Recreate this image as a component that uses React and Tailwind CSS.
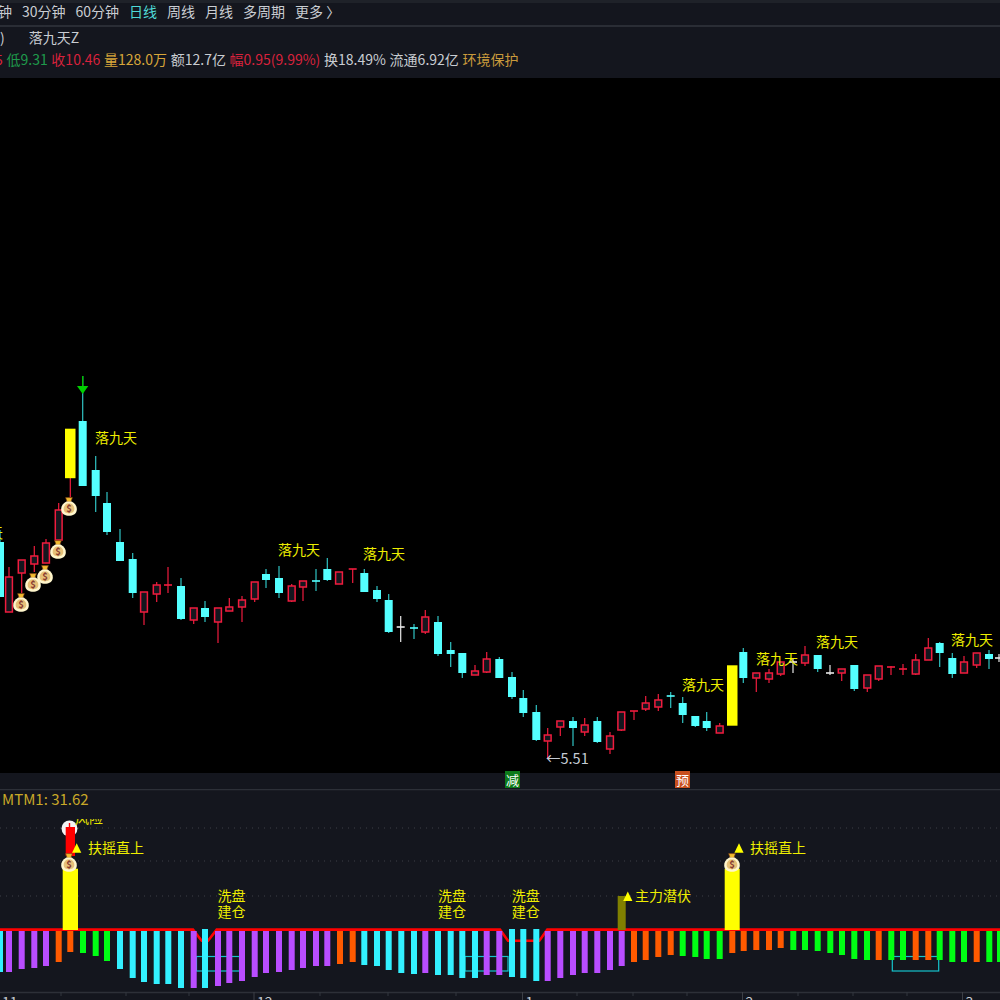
const CANDLES = [
  [0, 530, 542, 597, 597, 'c'], [9, 567, 577, 612, 612, 'r'], [21.7, 560, 560, 573, 593, 'r'], [34.3, 546, 556, 564, 572, 'r'],
  [46, 539, 543, 563, 563, 'r'], [58.7, 503, 510, 540, 540, 'r'], [82.7, 376, 421, 486, 486, 'c'], [95.7, 456, 470, 496, 512, 'c'],
  [107, 492, 503, 532, 535, 'c'], [120, 529, 542, 561, 561, 'c'], [132.7, 553, 559, 593, 598, 'c'], [144, 592, 592, 612, 625, 'r'],
  [156.7, 582, 585, 594, 602, 'r'], [168, 567, 585, 585, 593, 'r'], [181, 578, 586, 619, 620, 'c'], [193.7, 608, 608, 620, 624, 'r'],
  [205, 601, 608, 617, 622, 'c'], [218, 608, 608, 622, 643, 'r'], [229.3, 598, 607, 611, 611, 'r'], [242, 596, 600, 607, 622, 'r'],
  [254.7, 582, 582, 599, 602, 'r'], [266, 569, 574, 580, 588, 'c'], [279, 566, 578, 593, 598, 'c'], [291.7, 584, 586, 601, 602, 'r'],
  [303, 581, 581, 587, 601, 'r'], [316, 569, 581, 581, 591, 'c'], [327.3, 558, 569, 580, 581, 'c'], [339, 572, 572, 584, 584, 'r'],
  [352.7, 569, 569, 569, 583, 'r'], [364.3, 569, 573, 592, 592, 'c'], [377, 586, 590, 599, 602, 'c'], [388.7, 594, 600, 632, 633, 'c'],
  [400.7, 616, 627, 627, 642, 'w'], [414, 624, 628, 628, 639, 'c'], [425.3, 610, 617, 632, 634, 'r'], [438, 616, 622, 654, 656, 'c'],
  [450.7, 642, 650, 654, 667, 'c'], [462.3, 653, 653, 673, 678, 'c'], [475, 665, 671, 675, 675, 'r'], [486.7, 652, 659, 672, 673, 'r'],
  [499.3, 657, 659, 678, 678, 'c'], [512, 672, 677, 697, 699, 'c'], [523.3, 690, 698, 713, 717, 'c'], [536.3, 705, 712, 740, 741, 'c'],
  [547.7, 728, 735, 741, 759, 'r'], [560.3, 721, 721, 727, 736, 'r'], [573, 717, 721, 728, 746, 'c'], [584.7, 718, 725, 732, 736, 'r'],
  [597.3, 717, 721, 742, 743, 'c'], [610, 732, 736, 749, 754, 'r'], [621.3, 712, 712, 730, 731, 'r'], [634, 711, 711, 711, 720, 'r'],
  [645.7, 696, 703, 709, 711, 'r'], [658.3, 694, 700, 707, 711, 'r'], [670.7, 692, 696, 696, 708, 'c'], [682.7, 697, 703, 715, 723, 'c'],
  [695.3, 716, 716, 726, 727, 'c'], [706.7, 712, 721, 728, 731, 'c'], [719.7, 723, 726, 733, 733, 'r'], [743.3, 648, 652, 678, 683, 'c'],
  [756.3, 673, 673, 678, 692, 'r'], [769, 669, 673, 679, 683, 'r'], [780.7, 662, 662, 674, 676, 'r'], [793, 658, 662, 662, 673, 'w'],
  [805, 646, 655, 663, 666, 'r'], [817.7, 655, 655, 669, 672, 'c'], [830, 665, 673, 673, 675, 'w'], [841.7, 669, 669, 673, 681, 'r'],
  [854.3, 665, 665, 689, 691, 'c'], [867.3, 675, 675, 688, 692, 'r'], [878.7, 666, 666, 679, 681, 'r'], [891, 666, 667, 667, 675, 'r'],
  [903, 664, 669, 669, 675, 'r'], [915.7, 654, 660, 674, 675, 'r'], [928.3, 638, 648, 660, 660, 'r'], [939.7, 642, 643, 653, 667, 'c'],
  [952.3, 653, 658, 674, 678, 'c'], [964, 656, 662, 673, 673, 'r'], [976.7, 653, 653, 665, 668, 'r'], [989, 650, 654, 659, 669, 'c'],
  [999, 654, 658, 658, 662, 'w'],
]

const BAR_COLORS = { p: '#b94dff', c: '#33f0ff', o: '#ff5a00', g: '#00ff14' }

const BARS = [
  [0, 972, 'c'], [9, 972, 'p'], [21.7, 969, 'p'], [34.3, 968, 'p'], [46, 966, 'p'], [58.7, 962, 'o'], [70.3, 952, 'o'], [83, 953, 'g'],
  [95.7, 956, 'g'], [107, 961, 'g'], [120, 969, 'c'], [132.7, 978, 'c'], [144, 982, 'c'], [156.7, 984, 'c'], [168.3, 984, 'c'], [181, 988, 'c'],
  [193.7, 988, 'p'], [205, 988, 'c'], [218, 986, 'p'], [229.3, 983, 'p'], [242, 981, 'p'], [254.7, 977, 'p'], [266, 973, 'p'], [279, 972, 'p'],
  [291.7, 970, 'p'], [303, 968, 'p'], [316, 966, 'p'], [327.3, 966, 'p'], [340, 964, 'o'], [352.7, 962, 'o'], [364.3, 965, 'c'], [377, 966, 'c'],
  [388.7, 970, 'c'], [401.3, 973, 'c'], [414, 974, 'c'], [425.3, 973, 'p'], [438, 975, 'c'], [450.7, 975, 'c'], [462.3, 978, 'c'], [475, 978, 'c'],
  [486.7, 975, 'p'], [499.3, 975, 'p'], [512, 977, 'c'], [523.3, 978, 'c'], [536.3, 981, 'c'], [547.7, 981, 'p'], [560.3, 978, 'p'], [573, 975, 'p'],
  [584.7, 973, 'p'], [597.3, 973, 'p'], [610, 970, 'p'], [621.7, 966, 'p'], [634, 962, 'o'], [645.7, 960, 'o'], [658.3, 957, 'o'], [670.7, 955, 'o'],
  [682.7, 956, 'g'], [695.3, 957, 'g'], [706.7, 959, 'g'], [719.7, 959, 'g'], [732.3, 953, 'o'], [743.7, 951, 'o'], [756.3, 950, 'o'], [769, 950, 'o'],
  [780.7, 948, 'o'], [793.3, 950, 'g'], [805, 950, 'g'], [817.7, 951, 'g'], [830.3, 953, 'g'], [842, 955, 'g'], [854.3, 959, 'g'], [867, 960, 'g'],
  [878.7, 960, 'o'], [891.3, 960, 'g'], [903, 960, 'g'], [915.7, 960, 'o'], [928.3, 960, 'o'], [939.7, 960, 'g'], [952.3, 962, 'g'], [964, 962, 'g'],
  [976.7, 962, 'o'], [989.3, 962, 'g'], [1000, 962, 'g'],
]

const TICKS = [61, 126, 189, 320, 388, 456, 577, 633, 687, 798, 853, 907]
const MONTHS = [[254, '12'], [522.5, '1'], [742.5, '2'], [962.5, '3']]
const LUO = [[-39, 538], [95, 443], [278, 555], [363, 559], [682, 690], [756, 664], [816, 647], [951, 645]]
const BAGS = [[21, 603], [33, 583], [45, 575], [58, 550], [69, 507]]

function Candle({ c }) {
  const [x, top, bodyTop, bodyBottom, bottom, type] = c
  const color = type === 'c' ? '#54ffff' : type === 'r' ? '#f01c3e' : '#e8e8e8'
  const wick = type === 'c' ? '#30c4c4' : color
  const doji = bodyTop === bodyBottom
  return (
    <g>
      <line x1={x} x2={x} y1={top} y2={bottom} stroke={wick} strokeWidth="1.2" />
      {doji && <rect x={x - 4} y={bodyTop - 0.8} width="8" height="1.6" fill={color} />}
      {!doji && type === 'c' && <rect x={x - 4} y={bodyTop} width="8" height={bodyBottom - bodyTop} fill={color} />}
      {!doji && type === 'r' && (
        <rect x={x - 3.4} y={bodyTop} width="6.8" height={bodyBottom - bodyTop} fill="#14161e" stroke={color} strokeWidth="1.5" />
      )}
    </g>
  )
}

function MoneyBag({ x, y }) {
  return (
    <g transform={`translate(${x} ${y})`}>
      <path d="M-3.4 -9.4 L3.4 -9.4 L1.8 -5 L-1.8 -5 Z" fill="#f0bc30" stroke="#7a3a10" strokeWidth="0.6" />
      <path d="M-2.6 -5.5 C-6.4 -3.5 -8.2 -0.5 -7.8 3 C-7.3 7.2 -3.6 8.8 0 8.8 C3.6 8.8 7.3 7.2 7.8 3 C8.2 -0.5 6.4 -3.5 2.6 -5.5 Z" fill="#fff6cc" />
      <path d="M-2 -3.6 C-4.6 -2 -5.6 0 -5.3 2.6 C-5 5.4 -2.4 6.4 0 6.4 C2.4 6.4 5 5.4 5.3 2.6 C5.6 0 4.6 -2 2 -3.6 Z" fill="#e6c078" />
      <text x="0" y="4.6" textAnchor="middle" fontSize="9.5" fontWeight="700" fill="#8a3c30">$</text>
    </g>
  )
}

function Label({ x, y, children }) {
  return <text x={x} y={y} fontSize="14" fill="#eeee00">{children}</text>
}

function Triangle({ x, y }) {
  return <polygon points={`${x},${y} ${x - 4.6},${y + 9.4} ${x + 4.6},${y + 9.4}`} fill="#ffff00" />
}

function PriceChart() {
  return (
    <svg viewBox="0 78 1000 695" className="block w-[1000px] h-[695px]">
      {CANDLES.map(c => <Candle key={c[0]} c={c} />)}
      <line x1="70.3" x2="70.3" y1="478" y2="497" stroke="#f01c3e" strokeWidth="1.2" />
      <rect x="65" y="428.7" width="10.5" height="49.5" fill="#ffff00" />
      <rect x="727" y="665.3" width="10.5" height="60.4" fill="#ffff00" />
      <line x1="82.7" x2="82.7" y1="376" y2="386" stroke="#00c000" strokeWidth="1.4" />
      <polygon points="77,386 88.3,386 82.7,394" fill="#00d000" />
      {BAGS.map(b => <MoneyBag key={b[0]} x={b[0]} y={b[1]} />)}
      {LUO.map(l => <Label key={l[0]} x={l[0]} y={l[1]}>落九天</Label>)}
      <text x="546" y="764" fontSize="14.5" fill="#c4cbd4">←5.51</text>
    </svg>
  )
}

function IndicatorPanel() {
  return (
    <svg viewBox="0 789 1000 211" className="block w-[1000px] h-[211px]">
      <defs>
        <clipPath id="ind-clip"><rect x="0" y="819" width="1000" height="181" /></clipPath>
      </defs>
      <line x1="0" x2="1000" y1="789.5" y2="789.5" stroke="#2d3038" strokeWidth="1.5" />
      <text x="2" y="805" fontSize="15" fill="#c8a828">MTM1: 31.62</text>
      {[828, 861, 896].map(y => (
        <line key={y} x1="0" x2="1000" y1={y} y2={y} stroke="#3c3f46" strokeDasharray="1 5" />
      ))}

      <rect x="196.5" y="956.5" width="43" height="14.5" fill="none" stroke="#14c4cc" strokeWidth="1.2" />
      <rect x="465" y="956.5" width="43" height="14.5" fill="none" stroke="#14c4cc" strokeWidth="1.2" />
      <rect x="892.3" y="956.5" width="46.4" height="14.5" fill="none" stroke="#14c4cc" strokeWidth="1.2" />

      <polyline
        points="0,929.6 193,929.6 201.7,940.7 208,940.7 216.7,929.6 500,929.6 508,940.7 539.3,940.7 547.3,929.6 1000,929.6"
        fill="none" stroke="#ff0000" strokeWidth="2.6"
      />
      {BARS.map(b => {
        const inDip = (b[0] > 196 && b[0] < 215) || (b[0] > 505 && b[0] < 545)
        const top = inDip ? 929 : 931
        return <rect key={b[0]} x={b[0] - 3} y={top} width="6" height={b[1] - top} fill={BAR_COLORS[b[2]]} />
      })}

      <rect x="62.7" y="868.7" width="15.3" height="61.3" fill="#ffff00" />
      <rect x="724.7" y="868.7" width="15" height="61.3" fill="#ffff00" />
      <rect x="617.7" y="896" width="8" height="34" fill="#808000" />

      <g clipPath="url(#ind-clip)">
        <circle cx="69.5" cy="828.5" r="8" fill="#f4f4f4" />
        <text x="75" y="823" fontSize="14" fill="#e4e400">风险</text>
      </g>
      <rect x="65.7" y="827" width="9.3" height="29" fill="#ff0000" />
      <line x1="69.5" x2="69.5" y1="823" y2="827" stroke="#ff0000" strokeWidth="1.4" />

      <Triangle x={76.7} y={843.3} />
      <Triangle x={739} y={843.3} />
      <Triangle x={627.8} y={891.5} />
      <MoneyBag x={69} y={863} />
      <MoneyBag x={732} y={863} />

      <Label x={88} y={853}>扶摇直上</Label>
      <Label x={750} y={853}>扶摇直上</Label>
      <Label x={635} y={901}>主力潜伏</Label>
      {[217.5, 438, 511.8].map(x => (
        <g key={x}>
          <Label x={x} y={901}>洗盘</Label>
          <Label x={x} y={917}>建仓</Label>
        </g>
      ))}

      <line x1="0" x2="1000" y1="992.5" y2="992.5" stroke="#2d3038" strokeWidth="1.4" />
      {TICKS.map(x => <line key={x} x1={x} x2={x} y1="992" y2="996" stroke="#33363e" />)}
      {MONTHS.map(m => (
        <g key={m[0]}>
          <line x1={m[0]} x2={m[0]} y1="992" y2="1000" stroke="#3c3f46" />
          <text x={m[0] + 3} y="1007" fontSize="14" fill="#c8ccd2">{m[1]}</text>
        </g>
      ))}
      <text x="2" y="1007" fontSize="14" fill="#c8ccd2">11</text>
    </svg>
  )
}

export default function App() {
  return (
    <div className="w-[1000px] h-[1000px] overflow-hidden flex flex-col bg-[#14161e] text-[14px] leading-none font-['Noto_Sans_CJK_SC','Noto_Sans',sans-serif]">
      <div className="h-[27px] shrink-0 flex items-start gap-[10px] -ml-[2px] pt-[1px] border-t-[3px] border-t-[#1f2229] border-b-[2px] border-b-[#2a2d35] text-[#c9cdd2] whitespace-nowrap">
        <span>钟</span>
        <span>30分钟</span>
        <span>60分钟</span>
        <span className="text-[#4fd9d6]">日线</span>
        <span>周线</span>
        <span>月线</span>
        <span>多周期</span>
        <span>更多 〉</span>
      </div>

      <div className="h-[51px] shrink-0 flex flex-col text-[#c9cdd2] whitespace-nowrap">
        <div className="h-[17px] flex items-end gap-[24px]">
          <span>)</span>
          <span>落九天Z</span>
        </div>
        <div className="h-[22px] flex items-end gap-[3.7px] -ml-[5px]">
          <span className="text-[#d8223c]">5</span>
          <span className="text-[#1f9a4c]">低9.31</span>
          <span className="text-[#d8223c]">收10.46</span>
          <span className="text-[#d8a63a]">量128.0万</span>
          <span>额12.7亿</span>
          <span className="text-[#d8223c]">幅0.95(9.99%)</span>
          <span>换18.49%</span>
          <span>流通6.92亿</span>
          <span className="text-[#c99a3c]">环境保护</span>
        </div>
      </div>

      <div className="h-[695px] shrink-0 bg-black">
        <PriceChart />
      </div>

      <div className="h-[16px] shrink-0 relative">
        <span className="absolute left-[505px] -top-[2px] w-[15px] h-[17px] flex items-center justify-center bg-[#0c7a1a] text-white text-[13px]">减</span>
        <span className="absolute left-[675px] -top-[2px] w-[15px] h-[17px] flex items-center justify-center bg-[#c8501e] text-white text-[13px]">预</span>
      </div>

      <IndicatorPanel />
    </div>
  )
}
